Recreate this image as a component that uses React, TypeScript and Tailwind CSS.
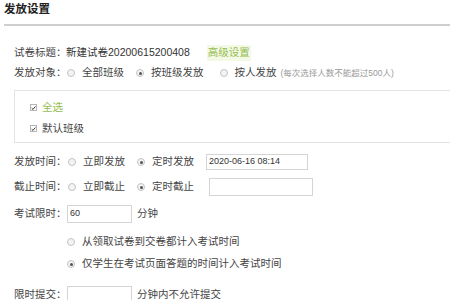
function Radio({ checked = false }: { checked?: boolean }) {
	return (
		<span className="w-[8px] h-[8px] rounded-full border border-[#c4c4c4] bg-[#f3f3f3] flex items-center justify-center shrink-0">
			{checked && <span className="w-[3px] h-[3px] rounded-full bg-[#555]"></span>}
		</span>
	);
}

function Check() {
	return (
		<span className="w-[7px] h-[7px] border border-[#b5b5b5] bg-white flex items-center justify-center shrink-0">
			<svg width="6" height="6" viewBox="0 0 6 6">
				<path d="M0.8 3.2 L2.4 4.7 L5.3 1.2" fill="none" stroke="#333" strokeWidth="1.2" />
			</svg>
		</span>
	);
}

function Option({ label, checked, className = "" }: { label: string; checked?: boolean; className?: string }) {
	return (
		<div className={`flex items-center gap-[7px] ${className}`}>
			<Radio checked={checked} />
			<span className="text-[#444]">{label}</span>
		</div>
	);
}

export default function App() {
	return (
		<div className="w-[450px] h-[300px] overflow-hidden bg-white text-[10.5px] text-[#444] whitespace-nowrap font-['Liberation_Sans','Noto_Sans_CJK_SC',sans-serif]">
			{/* header */}
			<div className="ml-1 h-[26px] border-b-2 border-[#cfcfcf] flex items-center">
				<h1 className="text-[11.5px] font-bold text-[#222] leading-none -mt-[4px]">发放设置</h1>
			</div>

			<div className="pl-[14px] pt-[17px]">
				<div className="h-[20px] flex items-center">
					<span className="w-[52px] shrink-0">试卷标题：</span>
					<span className="text-[#333]">新建试卷20200615200408</span>
					<span className="ml-[17px] px-[1px] text-[#93bd4f] bg-[#f4f9e6]">高级设置</span>
				</div>

				<div className="h-[20px] flex items-center">
					<span className="w-[53px] shrink-0">发放对象：</span>
					<Option label="全部班级" />
					<Option label="按班级发放" checked className="ml-[12px]" />
					<Option label="按人发放" className="ml-[16px]" />
					<span className="ml-[4px] text-[8.5px] text-[#999]">(每次选择人数不能超过500人)</span>
				</div>

				<div className="mt-[7px] h-[53px] border border-r-0 border-[#e3e3e3] pt-[6px] pl-[15px]">
					<div className="h-[21px] flex items-center gap-[5px]">
						<Check />
						<span className="text-[#93bd4f]">全选</span>
					</div>
					<div className="h-[21px] flex items-center gap-[5px]">
						<Check />
						<span>默认班级</span>
					</div>
				</div>

				<div className="mt-[9px] h-[20px] flex items-center">
					<span className="w-[54px] shrink-0">发放时间：</span>
					<Option label="立即发放" />
					<Option label="定时发放" checked className="ml-[12px]" />
					<div className="ml-[12px] w-[102px] h-[16px] border border-[#d5d5d5] flex items-center pl-[2px] text-[9px] text-[#333]">
						2020-06-16 08:14
					</div>
				</div>

				<div className="mt-[5px] h-[20px] flex items-center">
					<span className="w-[54px] shrink-0">截止时间：</span>
					<Option label="立即截止" />
					<Option label="定时截止" checked className="ml-[12px]" />
					<div className="ml-[15px] w-[104px] h-[18px] border border-[#d5d5d5]"></div>
				</div>

				<div className="mt-[7px] h-[20px] flex items-center">
					<span className="w-[53px] shrink-0">考试限时：</span>
					<div className="w-[65px] h-[18px] border border-[#d5d5d5] flex items-center pl-[2px] text-[9px] text-[#333]">60</div>
					<span className="ml-[5px]">分钟</span>
				</div>

				<div className="mt-[8px] h-[20px] flex items-center pl-[53px]">
					<Option label="从领取试卷到交卷都计入考试时间" />
				</div>
				<div className="mt-[2px] h-[20px] flex items-center pl-[53px]">
					<Option label="仅学生在考试页面答题的时间计入考试时间" checked />
				</div>

				<div className="mt-[11px] h-[20px] flex items-center">
					<span className="w-[53px] shrink-0">限时提交：</span>
					<div className="w-[65px] h-[18px] border border-[#d5d5d5]"></div>
					<span className="ml-[5px]">分钟内不允许提交</span>
				</div>
			</div>
		</div>
	);
}
